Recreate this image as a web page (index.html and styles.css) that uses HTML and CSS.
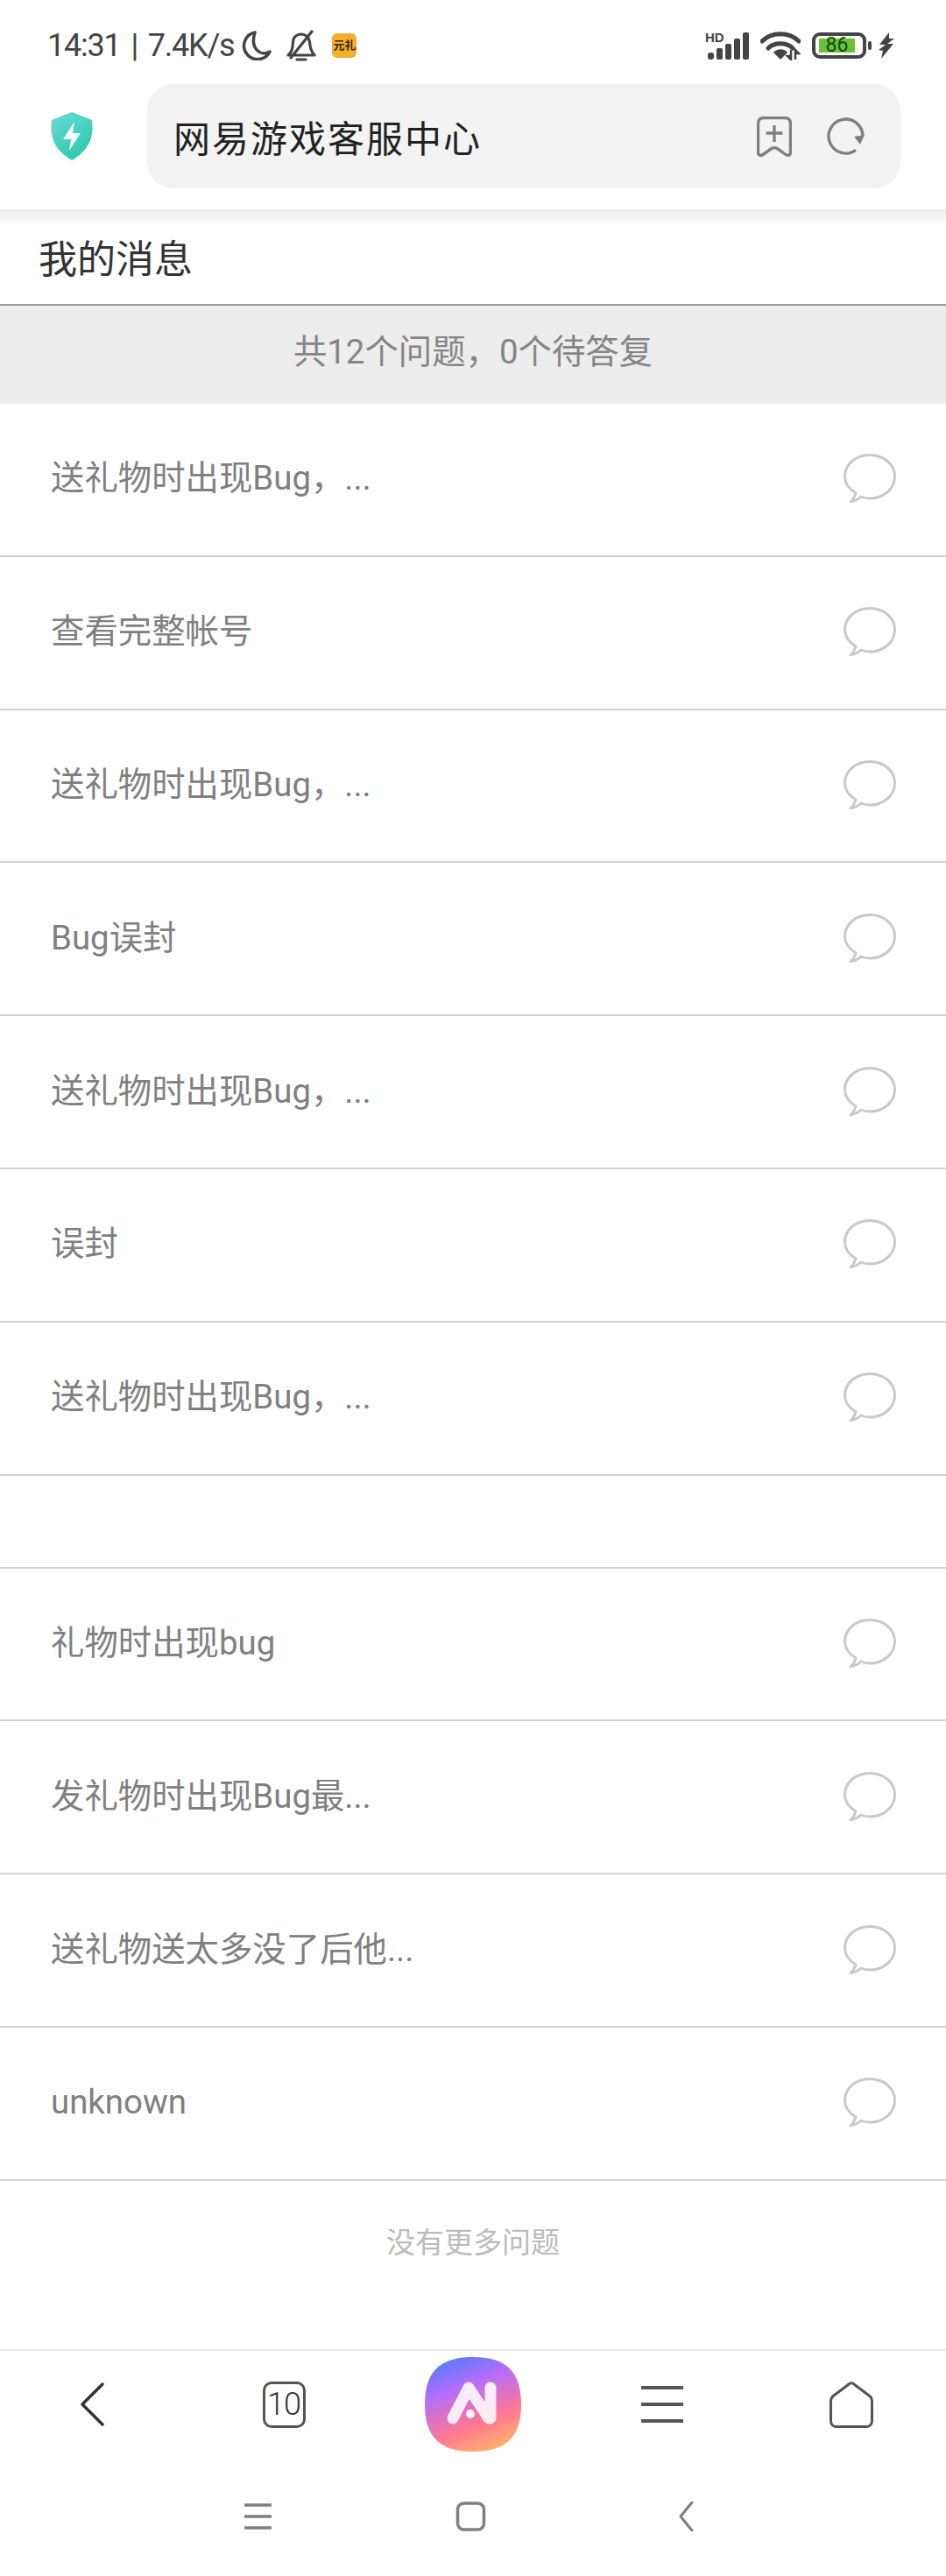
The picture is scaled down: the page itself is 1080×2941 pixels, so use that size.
FILE: index.html
```html
<!DOCTYPE html>
<html lang="zh">
<head>
    <meta charset="UTF-8">
    <meta name="viewport" content="width=device-width, initial-scale=1.0">
    <title>网易游戏客服中心</title>
    <link rel="stylesheet" href="styles.css">
</head>
<body>
    <svg class="defs" width="0" height="0">
        <symbol id="bubble" viewBox="0 0 60 56">
            <path d="M20 49C23 50.500 27 51 30 51 46 51 58.500 40 58.500 26S46 1.500 30 1.500 1.500 12 1.500 26C1.500 33 6 40 14 45 13 49 11 52 8 55 12 54 17 52 20 49Z" fill="none" stroke="#c9c9c9" stroke-width="3" stroke-linejoin="round"/>
        </symbol>
    </svg>

    <div id="page">
        <!-- Status bar -->
        <div class="status-bar">
            <div class="status-left">
                <span class="clock">14:31 | 7.4K/s</span>
                <svg class="moon" width="34" height="34" viewBox="0 0 34 34"><path d="M15 2A15.500 15.500 0 1 0 32 24C22 30 9 21 15 2Z" fill="none" stroke="#444" stroke-width="3.500" stroke-linejoin="round"/></svg>
                <svg class="bell" width="35" height="37" viewBox="0 0 35 37"><path d="M3 29C8 25 8 20 8.500 14 9 8 13 5 18 5 23 5 27 9 27.500 14 28 21 29 25 33 29ZM13 34H23M30 2 6 32" fill="none" stroke="#444" stroke-width="3.200" stroke-linecap="round" stroke-linejoin="round"/></svg>
                <span class="app-badge">元礼</span>
            </div>
            <div class="status-right">
                <svg width="50" height="32" viewBox="0 0 50 32">
                    <text x="0" y="12" class="hd">HD</text>
                    <rect x="3" y="24" width="7" height="8" rx="3" fill="#444"/>
                    <rect x="13" y="19" width="7" height="13" rx="2" fill="#444"/>
                    <rect x="23" y="14" width="7" height="18" rx="2" fill="#444"/>
                    <rect x="33" y="8" width="7" height="24" rx="2" fill="#444"/>
                    <rect x="43" y="1" width="7" height="31" rx="2" fill="#444"/>
                </svg>
                <svg width="46" height="34" viewBox="0 0 46 34">
                    <path d="M2 12C13 1 33 1 44 12M9 20C16 13 30 13 37 20" fill="none" stroke="#444" stroke-width="5" stroke-linecap="round"/>
                    <path d="M15 25C19 20 27 20 31 25L23 33Z" fill="#444"/>
                    <path d="M35 22V33L31 29H35M40 33V22L44 26H40" fill="none" stroke="#444" stroke-width="2.500"/>
                </svg>
                <div class="battery-wrap">
                    <div class="battery"><div class="battery-fill">86</div></div>
                    <span class="battery-nub"></span>
                </div>
                <svg width="18" height="30" viewBox="0 0 18 30"><path d="M12 0 1 14 8 14 0 20 5 21 3 30 17 13 10 13 18 7 12 7Z" fill="#444"/></svg>
            </div>
        </div>

        <!-- Browser toolbar -->
        <div class="toolbar">
            <svg class="shield" width="48" height="55" viewBox="0 0 48 55">
                <defs>
                    <linearGradient id="shield-grad" x1="0.100" y1="0" x2="0.800" y2="1">
                        <stop offset="0" stop-color="#66d8d8"/>
                        <stop offset="1" stop-color="#2cc9a6"/>
                    </linearGradient>
                </defs>
                <path d="M24 0 47 9C49 26 46 42 24 55 2 42-1 26 1 9Z" fill="url(#shield-grad)"/>
                <path d="M27 11 14 31H23L21 44 34 24H25Z" fill="#fff" opacity="0.950"/>
            </svg>
            <div class="address-pill">
                <span class="address-title">网易游戏客服中心</span>
                <div class="address-icons">
                    <svg width="40" height="46" viewBox="0 0 40 46"><path d="M8 1.500H32C36 1.500 38.500 4 38.500 8V41C38.500 44.500 35 45 33 43.500L24 37C21.500 35.500 18.500 35.500 16 37L7 43.500C5 45 1.500 44.500 1.500 41V8C1.500 4 4 1.500 8 1.500ZM20 10V29M10.500 19H29.500" fill="none" stroke="#808080" stroke-width="3.400" stroke-linejoin="round"/></svg>
                    <svg width="43" height="43" viewBox="0 0 43 43"><path d="M33 37.300A19.500 19.500 0 1 1 41 21" fill="none" stroke="#808080" stroke-width="3.400"/><path d="M31 22 43 20 38 31Z" fill="#808080"/></svg>
                </div>
            </div>
        </div>

        <div class="page-title">我的消息</div>
        <div class="summary">共12个问题，0个待答复</div>

        <ul class="msg-list">
            <li class="msg-row"><span>送礼物时出现Bug，...</span><svg class="bubble" width="60" height="56"><use href="#bubble"/></svg></li>
            <li class="msg-row"><span>查看完整帐号</span><svg class="bubble" width="60" height="56"><use href="#bubble"/></svg></li>
            <li class="msg-row"><span>送礼物时出现Bug，...</span><svg class="bubble" width="60" height="56"><use href="#bubble"/></svg></li>
            <li class="msg-row"><span>Bug误封</span><svg class="bubble" width="60" height="56"><use href="#bubble"/></svg></li>
            <li class="msg-row"><span>送礼物时出现Bug，...</span><svg class="bubble" width="60" height="56"><use href="#bubble"/></svg></li>
            <li class="msg-row"><span>误封</span><svg class="bubble" width="60" height="56"><use href="#bubble"/></svg></li>
            <li class="msg-row"><span>送礼物时出现Bug，...</span><svg class="bubble" width="60" height="56"><use href="#bubble"/></svg></li>
            <li class="msg-row msg-row-empty"></li>
            <li class="msg-row"><span>礼物时出现bug</span><svg class="bubble" width="60" height="56"><use href="#bubble"/></svg></li>
            <li class="msg-row"><span>发礼物时出现Bug最...</span><svg class="bubble" width="60" height="56"><use href="#bubble"/></svg></li>
            <li class="msg-row"><span>送礼物送太多没了后他...</span><svg class="bubble" width="60" height="56"><use href="#bubble"/></svg></li>
            <li class="msg-row"><span>unknown</span><svg class="bubble" width="60" height="56"><use href="#bubble"/></svg></li>
        </ul>

        <div class="no-more">没有更多问题</div>

        <!-- Browser bottom bar -->
        <div class="bottom-bar">
            <div class="bar-item">
                <svg width="54" height="50" viewBox="0 0 54 50"><path d="M36 2 13 25 36 48" fill="none" stroke="#333" stroke-width="3.500" stroke-linecap="round" stroke-linejoin="round"/></svg>
            </div>
            <div class="bar-item"><div class="tab-count">10</div></div>
            <div class="bar-item">
                <svg width="110" height="108" viewBox="0 0 110 108">
                    <defs>
                        <linearGradient id="logo-grad" x1="0.300" y1="0" x2="0.700" y2="1">
                            <stop offset="0" stop-color="#5a7bfb"/>
                            <stop offset="0.300" stop-color="#b56dfb"/>
                            <stop offset="0.700" stop-color="#ff7890"/>
                            <stop offset="1" stop-color="#ffb36c"/>
                        </linearGradient>
                    </defs>
                    <path d="M55 0C92 0 110 16 110 54S92 108 55 108 0 92 0 54 18 0 55 0Z" fill="url(#logo-grad)"/>
                    <path d="M32 70 50 35 73 70M75 35V70" fill="none" stroke="#fff" stroke-opacity="0.860" stroke-width="13" stroke-linecap="round" stroke-linejoin="round"/>
                    <circle cx="52" cy="65" r="5" fill="#fff" fill-opacity="0.900"/>
                </svg>
            </div>
            <div class="bar-item">
                <svg width="48" height="44" viewBox="0 0 48 44"><path d="M0 3H48M0 22H48M0 41H48" stroke="#555" stroke-width="4"/></svg>
            </div>
            <div class="bar-item">
                <svg width="50" height="53" viewBox="0 0 50 53"><path d="M21.500 3.500C23.500 1 26.500 1 28.500 3.500L46.500 17C48 19 48.500 20 48.500 22V45C48.500 49 46 51.500 42 51.500H8C4 51.500 1.500 49 1.500 45V22C1.500 20 2 19 3.500 17Z" fill="none" stroke="#555" stroke-width="3" stroke-linejoin="round"/></svg>
            </div>
        </div>

        <!-- System navigation -->
        <div class="sys-nav">
            <svg width="60" height="34" viewBox="0 0 60 34"><path d="M14 4H45M14 17H45M14 30H45" stroke="#808080" stroke-width="3.500"/></svg>
            <svg width="60" height="34" viewBox="0 0 60 34"><rect x="12.500" y="2" width="30" height="30" rx="7" fill="none" stroke="#808080" stroke-width="3.500"/></svg>
            <svg width="60" height="34" viewBox="0 0 60 34"><path d="M35 1 22 17 35 33" fill="none" stroke="#808080" stroke-width="3" stroke-linecap="round" stroke-linejoin="round"/></svg>
        </div>
    </div>
</body>
</html>
```

FILE: styles.css
```css
* {
    box-sizing: border-box;
}

body {
    margin: 0;
    font-family: Roboto, "Noto Sans CJK SC", sans-serif;
    background-color: #ffffff;
}

.defs {
    display: block;
    height: 0;
}

#page {
    display: flex;
    flex-direction: column;
    height: 2941px;
    overflow: hidden;
}

/* status bar */
.status-bar {
    display: flex;
    justify-content: space-between;
    align-items: center;
    height: 96px;
    padding: 8px 59px 0 54px;
    color: #444;
}

.status-left,
.status-right {
    display: flex;
    align-items: center;
}

.clock {
    font-size: 36px;
    letter-spacing: -1.2px;
    word-spacing: 4px;
    white-space: nowrap;
}

.moon {
    margin-left: 9px;
}

.bell {
    margin-left: 16px;
}

.app-badge {
    width: 28px;
    height: 28px;
    margin-left: 18px;
    border-radius: 6px;
    background-color: #f5ae2a;
    color: #3a2a10;
    font-size: 13px;
    font-weight: bold;
    line-height: 28px;
    text-align: center;
    white-space: nowrap;
}

.status-right {
    gap: 13px;
}

.hd {
    font: bold 15px "Liberation Sans", sans-serif;
    fill: #444;
}

.battery-wrap {
    display: flex;
    align-items: center;
    gap: 2px;
    margin-right: -5px;
}

.battery {
    width: 62px;
    height: 30px;
    padding: 3px 4px;
    border: 4px solid #444;
    border-radius: 9px;
}

.battery-fill {
    width: 41px;
    height: 16px;
    background-color: #6cc038;
    color: #0e4a0e;
    font-size: 23px;
    line-height: 16px;
    text-align: center;
}

.battery-nub {
    width: 4px;
    height: 10px;
    border-radius: 2px;
    background-color: #444;
}

/* toolbar */
.toolbar {
    display: flex;
    align-items: flex-start;
    gap: 62px;
    height: 143px;
    padding: 0 52px 24px 58px;
    background-color: #fff;
}

.shield {
    margin-top: 32px;
    flex-shrink: 0;
}

.address-pill {
    display: flex;
    flex: 1;
    justify-content: space-between;
    align-items: center;
    height: 119px;
    padding: 0 41px 0 30px;
    border-radius: 30px;
    background-color: #f3f3f3;
}

.address-title {
    color: #222;
    font-size: 42px;
    letter-spacing: 2px;
}

.address-icons {
    display: flex;
    align-items: center;
    gap: 40px;
}

/* content */
.page-title {
    height: 108px;
    padding-left: 44px;
    background: linear-gradient(#ececec, #ffffff 20px);
    color: #333;
    font-size: 44px;
    line-height: 116px;
}

.summary {
    height: 114px;
    border-top: 2px solid #999;
    background-color: #ededed;
    color: #858585;
    font-size: 38.4px;
    line-height: 106px;
    text-align: center;
}

.msg-list {
    margin: 0;
    padding: 0;
    list-style: none;
}

.msg-row {
    display: flex;
    justify-content: space-between;
    align-items: center;
    height: 174.8px;
    padding: 0 57px 2px 58px;
    border-bottom: 2px solid #d2d2d2;
    color: #808080;
    font-size: 38.4px;
    line-height: 50px;
}

.msg-row-empty {
    height: 106px;
}

.no-more {
    height: 192px;
    padding-top: 44px;
    color: #bbb;
    font-size: 33px;
    text-align: center;
}

/* bottom bar */
.bottom-bar {
    display: flex;
    align-items: center;
    height: 125px;
    border-top: 2px solid #e8e8e8;
}

.bar-item {
    display: flex;
    flex: 1;
    justify-content: center;
    align-items: center;
}

.tab-count {
    width: 49px;
    height: 53px;
    border: 3.5px solid #555;
    border-radius: 10px;
    color: #333;
    font-size: 36px;
    font-weight: 300;
    letter-spacing: -1px;
    line-height: 46px;
    text-align: center;
}

.sys-nav {
    display: flex;
    justify-content: center;
    gap: 185px;
    padding-top: 49px;
}
```
